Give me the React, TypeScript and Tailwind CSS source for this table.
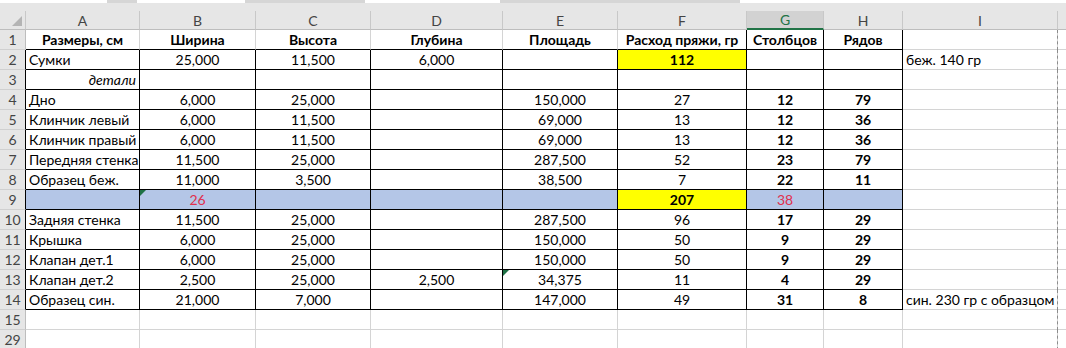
import React from 'react';

type Cell = { t?: string; b?: boolean; i?: boolean; red?: boolean; bg?: 'y' | 'blue'; align?: 'l' | 'c' | 'r'; tri?: boolean };

const COLS = ['A', 'B', 'C', 'D', 'E', 'F', 'G', 'H', 'I'];

const c = (t: string, extra: Partial<Cell> = {}): Cell => ({ t, ...extra });
const e: Cell = {};
const g = (t: string) => c(t, { b: true });

// rows 1..14, then 15 and 29
const rows: { n: string; cells: Cell[] }[] = [
  { n: '1', cells: [g('Размеры, см'), g('Ширина'), g('Высота'), g('Глубина'), g('Площадь'), g('Расход пряжи, гр'), g('Столбцов'), g('Рядов'), e] },
  { n: '2', cells: [c('Сумки', { align: 'l' }), c('25,000'), c('11,500'), c('6,000'), e, c('112', { b: true, bg: 'y' }), e, e, c('беж. 140 гр', { align: 'l' })] },
  { n: '3', cells: [c('детали', { i: true, align: 'r' }), e, e, e, e, e, e, e, e] },
  { n: '4', cells: [c('Дно', { align: 'l' }), c('6,000'), c('25,000'), e, c('150,000'), c('27'), g('12'), g('79'), e] },
  { n: '5', cells: [c('Клинчик левый', { align: 'l' }), c('6,000'), c('11,500'), e, c('69,000'), c('13'), g('12'), g('36'), e] },
  { n: '6', cells: [c('Клинчик правый', { align: 'l' }), c('6,000'), c('11,500'), e, c('69,000'), c('13'), g('12'), g('36'), e] },
  { n: '7', cells: [c('Передняя стенка', { align: 'l' }), c('11,500'), c('25,000'), e, c('287,500'), c('52'), g('23'), g('79'), e] },
  { n: '8', cells: [c('Образец беж.', { align: 'l' }), c('11,000'), c('3,500'), e, c('38,500'), c('7'), g('22'), g('11'), e] },
  {
    n: '9',
    cells: [
      { bg: 'blue' },
      c('26', { red: true, bg: 'blue', tri: true }),
      { bg: 'blue' },
      { bg: 'blue' },
      { bg: 'blue' },
      c('207', { b: true, bg: 'y' }),
      c('38', { red: true, bg: 'blue' }),
      { bg: 'blue' },
      e,
    ],
  },
  { n: '10', cells: [c('Задняя стенка', { align: 'l' }), c('11,500'), c('25,000'), e, c('287,500'), c('96'), g('17'), g('29'), e] },
  { n: '11', cells: [c('Крышка', { align: 'l' }), c('6,000'), c('25,000'), e, c('150,000'), c('50'), g('9'), g('29'), e] },
  { n: '12', cells: [c('Клапан дет.1', { align: 'l' }), c('6,000'), c('25,000'), e, c('150,000'), c('50'), g('9'), g('29'), e] },
  { n: '13', cells: [c('Клапан дет.2', { align: 'l' }), c('2,500'), c('25,000'), c('2,500'), c('34,375', { tri: true }), c('11'), g('4'), g('29'), e] },
  { n: '14', cells: [c('Образец син.', { align: 'l' }), c('21,000'), c('7,000'), e, c('147,000'), c('49'), g('31'), g('8'), c('син. 230 гр с образцом', { align: 'l' })] },
  { n: '15', cells: [e, e, e, e, e, e, e, e, e] },
  { n: '29', cells: [e, e, e, e, e, e, e, e, e] },
];

// r is the index in rows (0 => row 1), col 1..8 = A..H
const boxed = (r: number, col: number) => {
  if (col < 1 || col > 8 || r < 0 || r > 13) return false;
  if (r === 0) return col >= 7;
  return true;
};

const Tri = () => (
  <span className="absolute left-0 top-0 w-0 h-0 border-t-[6px] border-t-[#1e7145] border-r-[6px] border-r-transparent" />
);

export default function App() {
  return (
    <div className="w-[1066px] h-[348px] overflow-hidden bg-white text-black font-['Lato','Open_Sans',sans-serif] text-[14px]">
      {/* strip under formula bar */}
      <div className="h-[3px] flex bg-[#d6d6d6]">
        <div className="w-[107px] bg-white" />
        <div className="w-[30px]" />
        <div className="w-[108px] bg-white" />
        <div className="w-[120px]" />
        <div className="w-[135px] bg-white" />
        <div className="w-[240px]" />
        <div className="flex-1 bg-white" />
      </div>
      <div className="h-[8px] bg-[#e6e6e6]" />

      <div className="grid grid-cols-[26px_114px_116px_115px_132px_115px_129px_77px_79px_155px_1fr]">
        {/* column header row */}
        <div className="h-[19px] bg-[#e6e6e6] border-r border-b border-r-[#c8c8c8] border-b-[#bdbdbd] relative">
          <span className="absolute right-[3px] bottom-[3px] w-0 h-0 border-l-[10px] border-l-transparent border-b-[10px] border-b-[#b4b4b4]" />
        </div>
        {COLS.map((L) =>
          L === 'G' ? (
            <div key={L} className="h-[19px] bg-[#d2d2d2] border-r border-r-[#c8c8c8] border-b-2 border-b-[#217346] flex items-center justify-center text-[#217346]">
              {L}
            </div>
          ) : (
            <div key={L} className="h-[19px] bg-[#e6e6e6] border-r border-b border-r-[#c8c8c8] border-b-[#bdbdbd] flex items-center justify-center text-[#444]">
              {L}
            </div>
          )
        )}
        <div className="h-[19px] bg-[#e6e6e6] border-b border-b-[#bdbdbd]" />

        {rows.map((row, r) => (
          <React.Fragment key={row.n}>
            <div
              className={`h-[20px] bg-[#e6e6e6] border-r border-b border-b-[#d0d0d0] flex items-center justify-center text-[#444] ${
                boxed(r, 1) ? 'border-r-black' : 'border-r-[#bdbdbd]'
              }`}
            >
              {row.n}
            </div>
            {row.cells.map((cell, ci) => {
              const col = ci + 1;
              const rBlack = boxed(r, col) || boxed(r, col + 1);
              const bBlack = boxed(r, col) || boxed(r + 1, col) || (r === 0 && col <= 6);
              const align = cell.align === 'l' ? 'justify-start' : cell.align === 'r' ? 'justify-end' : 'justify-center';
              const bg = cell.bg === 'y' ? 'bg-[#ffff00]' : cell.bg === 'blue' ? 'bg-[#b4c6e7]' : '';
              const rBorder = col === 9 ? 'border-r-[#d4d4d4]' : rBlack ? 'border-r-black' : 'border-r-[#d4d4d4]';
              return (
                <div
                  key={ci}
                  className={`relative h-[20px] border-r border-b ${rBorder} ${
                    bBlack ? 'border-b-black' : 'border-b-[#d4d4d4]'
                  } ${bg} flex items-center ${align} px-[3px] whitespace-nowrap ${cell.b ? 'font-bold' : ''} ${
                    cell.i ? 'italic' : ''
                  } ${cell.red ? 'text-[#e0304e]' : ''}`}
                >
                  {cell.tri && <Tri />}
                  {cell.t}
                  {/* page break marker */}
                  {col === 9 && (
                    <span className="absolute right-[-1px] top-0 bottom-[-1px] border-r border-dashed border-[#8c8c8c]" />
                  )}
                </div>
              );
            })}
            <div className="h-[20px] border-b border-b-[#d4d4d4]" />
          </React.Fragment>
        ))}
      </div>
    </div>
  );
}
